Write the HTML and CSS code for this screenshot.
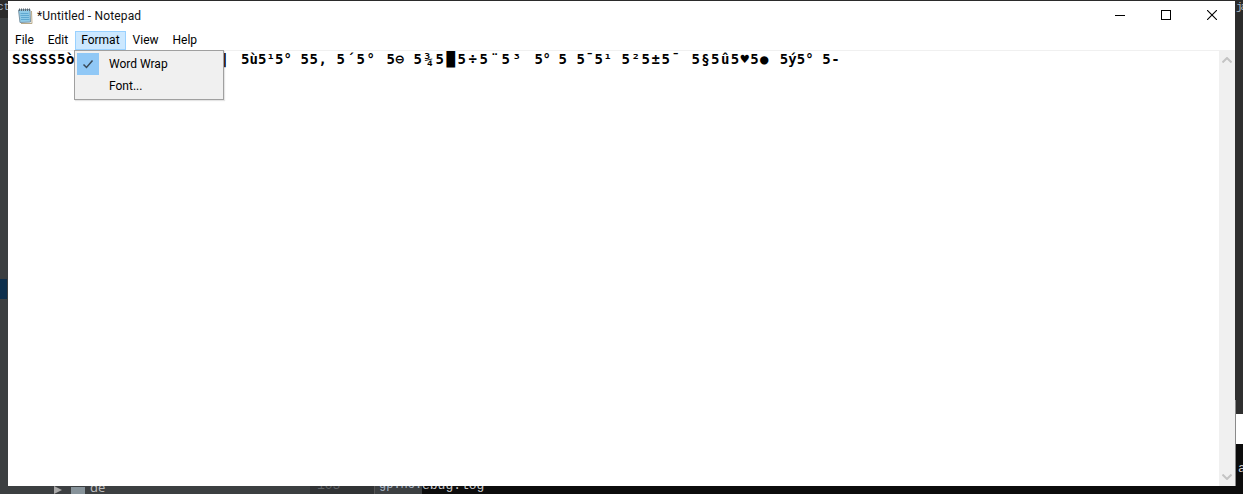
FILE: index.html
```html
<!DOCTYPE html>
<html lang="en">
<head>
  <meta charset="UTF-8">
  <title>*Untitled - Notepad</title>
  <link rel="stylesheet" href="styles.css">
</head>
<body>
  <!-- what shows around the notepad window -->
  <div class="desktop">
    <div class="left-strip">
      <div class="left-top"><span class="clip-left">ct</span></div>
      <div class="left-mid"></div>
      <div class="left-sel"></div>
      <div class="left-mid grow"></div>
    </div>
    <div class="center-strip">
      <div class="bottom-bar">
        <div class="tree">
          <span class="arrow"></span>
          <span class="folder"></span>
          <span>de</span>
        </div>
        <div class="gutter">103</div>
        <div class="code-dark">gp.hc.</div>
        <div class="code-black">ebug.log</div>
      </div>
    </div>
    <div class="right-strip">
      <div class="right-top">ja</div>
      <div class="right-mid"></div>
      <div class="right-white"></div>
      <div class="right-black">a</div>
    </div>
  </div>

  <div class="window">
    <div class="titlebar">
      <svg class="app-icon" width="16" height="16" viewBox="0 0 16 16">
        <path d="M1.5 2 L13 1.5 L13.5 14 L3 14.5 Z" fill="#8fcbe8" stroke="#7d97a7"/>
        <path d="M3.5 5.5H11.5M3.5 7.5H12M4 9.5H12M4 11.5H12.5" stroke="#5fa8d0"/>
        <path d="M14.5 3 L15 15.5 L4 15.5" fill="none" stroke="#b7a988"/>
        <path d="M2.5 0.5V3M4.5 0.5V3M6.5 0.5V3M8.5 0.5V3M10.5 0.5V3M12.5 0.5V3" stroke="#5a6770"/>
      </svg>
      <span class="title">*Untitled - Notepad</span>
      <div class="controls">
        <div class="ctl">
          <svg width="10" height="10" viewBox="0 0 10 10"><path d="M0 5.5H10" stroke="#000"/></svg>
        </div>
        <div class="ctl">
          <svg width="10" height="10" viewBox="0 0 10 10"><rect x="0.5" y="0.5" width="9" height="9" fill="none" stroke="#000"/></svg>
        </div>
        <div class="ctl">
          <svg width="10" height="10" viewBox="0 0 10 10"><path d="M0 0L10 10M10 0L0 10" stroke="#000" stroke-width="1.1"/></svg>
        </div>
      </div>
    </div>

    <div class="menubar">
      <div class="menu-item">File</div>
      <div class="menu-item">Edit</div>
      <div class="menu-item open">Format</div>
      <div class="menu-item">View</div>
      <div class="menu-item">Help</div>
    </div>

    <div class="editor">
      <pre class="text">SSSSS5ò                <span class="wider">‖ </span><span class="tight">5ù5¹5° </span>55, <span class="wide">5´5° </span>5⊖ <span class="wider">5¾5█5÷5¨5³ </span><span class="tighter">5° </span>5 5¯5¹ <span class="wide">5²5±5¯ </span><span class="mid">5§5û5♥5● </span><span class="tight">5ý5° </span>5-</pre>
      <div class="scrollbar">
        <svg width="10" height="6" viewBox="0 0 10 6"><path d="M0.5 5.5L5 1L9.5 5.5" fill="none" stroke="#c4c4c4" stroke-width="2"/></svg>
        <svg width="10" height="6" viewBox="0 0 10 6"><path d="M0.5 0.5L5 5L9.5 0.5" fill="none" stroke="#c4c4c4" stroke-width="2"/></svg>
      </div>
    </div>

    <div class="dropdown">
      <div class="drop-row">
        <span class="check">
          <svg width="12" height="10" viewBox="0 0 12 10"><path d="M1.5 5.5L4.5 8.5L10.5 1.5" fill="none" stroke="#3a4a58" stroke-width="1.5"/></svg>
        </span>
        <span class="drop-label">Word Wrap</span>
      </div>
      <div class="drop-row">
        <span class="check none"></span>
        <span class="drop-label">Font...</span>
      </div>
    </div>

    <div class="window-edge"></div>
  </div>
</body>
</html>
```

FILE: styles.css
```css
html, body {
  margin: 0;
  padding: 0;
  height: 100%;
}
body {
  position: relative;
  overflow: hidden;
  background-color: #3c3f41;
  font-family: Roboto, "Noto Sans", sans-serif;
}

/* background behind the window */
.desktop {
  display: flex;
  height: 494px;
}
.left-strip {
  width: 8px;
  display: flex;
  flex-direction: column;
  overflow: hidden;
}
.left-top {
  height: 18px;
  background-color: #2b2b2b;
  color: #a9b7c6;
  font: 11px "Liberation Mono", monospace;
  line-height: 14px;
  white-space: nowrap;
}
.clip-left {
  display: block;
  margin-left: -3px;
}
.left-mid {
  height: 261px;
  background-color: #3c3f41;
}
.left-mid.grow {
  height: auto;
  flex: 1;
}
.left-sel {
  height: 20px;
  width: 7px;
  background-color: #0d2f4c;
}
.center-strip {
  flex: 1;
  display: flex;
  flex-direction: column;
  justify-content: flex-end;
  background-color: #2b2b2b;
}
.bottom-bar {
  display: flex;
  height: 20px;
  margin-left: -8px;
  margin-right: -8px;
  font: 13px "Liberation Mono", monospace;
  line-height: 20px;
  align-items: flex-end;
  background-color: #3c3f41;
}
.tree {
  width: 310px;
  height: 20px;
  box-sizing: border-box;
  padding-left: 54px;
  display: flex;
  align-items: flex-end;
  color: #bbbbbb;
  font-family: "Noto Sans", sans-serif;
  font-size: 13px;
  line-height: 14px;
}
.arrow {
  width: 0;
  height: 0;
  border-left: 8px solid #a9a9a9;
  border-top: 4px solid transparent;
  border-bottom: 4px solid transparent;
  margin-right: 9px;
}
.folder {
  width: 14px;
  height: 7px;
  background-color: #87939a;
  margin-right: 5px;
}
.gutter {
  width: 65px;
  height: 20px;
  box-sizing: border-box;
  padding-left: 7px;
  background-color: #313335;
  color: #606366;
  border-right: 1px solid #555;
  line-height: 23px;
}
.code-dark {
  width: 47px;
  height: 20px;
  padding-left: 4px;
  box-sizing: border-box;
  background-color: #3c3f41;
  color: #a9b7c6;
  font-size: 12px;
  line-height: 23px;
  white-space: nowrap;
  overflow: hidden;
}
.code-black {
  flex: 1;
  height: 20px;
  background-color: #0c0c0c;
  color: #d0d0d0;
  line-height: 23px;
}
.right-strip {
  width: 8px;
  display: flex;
  flex-direction: column;
  overflow: hidden;
  position: relative;
  z-index: 1;
}
.right-top {
  height: 30px;
  background-color: #2b2b2b;
  color: #a9b7c6;
  font: 11px "Liberation Mono", monospace;
  letter-spacing: -2px;
  line-height: 14px;
  padding-left: 1px;
}
.right-mid {
  height: 385px;
  background-color: #2f2f2f;
}
.right-white {
  height: 30px;
  background-color: #ffffff;
}
.right-black {
  flex: 1;
  background-color: #0c0c0c;
  color: #d0d0d0;
  font: 13px "Liberation Mono", monospace;
  line-height: 50px;
  padding-left: 3px;
}

/* notepad window, floating over the desktop */
.window {
  position: absolute;
  left: 8px;
  top: 1px;
  width: 1227px;
  height: 485px;
  background-color: #fff;
  display: flex;
  flex-direction: column;
  font-size: 12px;
  color: #000;
}
.window-edge {
  position: absolute;
  right: -1px;
  bottom: 0;
  width: 1px;
  height: 86px;
  background-color: #8a8a8a;
  z-index: 2;
}
.titlebar {
  height: 30px;
  display: flex;
  align-items: center;
  padding-left: 9px;
}
.app-icon {
  margin-right: 4px;
}
.title {
  flex: 1;
  color: #111;
  padding-bottom: 1px;
  letter-spacing: 0.15px;
}
.controls {
  display: flex;
}
.ctl {
  width: 46px;
  height: 30px;
  display: flex;
  align-items: center;
  justify-content: center;
  padding-bottom: 2px;
  box-sizing: border-box;
}
.ctl svg {
  display: block;
}
.menubar {
  height: 19px;
  display: flex;
}
.menu-item {
  padding: 0 7px;
  line-height: 19px;
  box-sizing: border-box;
}
.menu-item.open {
  background-color: #cce8ff;
  border: 1px solid #99d1ff;
  padding: 0 5px;
  line-height: 17px;
}
.editor {
  flex: 1;
  display: flex;
  border-top: 1px solid #f0f0f0;
  min-height: 0;
}
.text {
  flex: 1;
  margin: 0;
  padding: 1px 0 0 4px;
  font: bold 14px "DejaVu Sans Mono", monospace;
  letter-spacing: 0.57px;
  line-height: 15px;
  color: #000;
  white-space: pre;
  overflow: hidden;
}
.tighter {
  letter-spacing: -0.43px;
}
.tight {
  letter-spacing: 0.07px;
}
.mid {
  letter-spacing: 1.37px;
}
.wide {
  letter-spacing: 1.57px;
}
.wider {
  letter-spacing: 2.57px;
}
.scrollbar {
  width: 16px;
  background-color: #f0f0f0;
  display: flex;
  flex-direction: column;
  justify-content: space-between;
  align-items: center;
  padding: 6px 0;
  box-sizing: border-box;
}
.scrollbar svg {
  display: block;
}
.dropdown {
  position: absolute;
  left: 66px;
  top: 49px;
  width: 150px;
  height: 50px;
  box-sizing: border-box;
  padding: 2px;
  background-color: #f0f0f0;
  border: 1px solid #a0a0a0;
  box-shadow: 1px 1px 1px rgba(0, 0, 0, 0.1);
}
.drop-row {
  height: 22px;
  display: flex;
  align-items: center;
}
.check {
  width: 22px;
  height: 22px;
  margin-right: 10px;
  background-color: #90c8f6;
  display: flex;
  align-items: center;
  justify-content: center;
}
.check.none {
  background-color: transparent;
}
.drop-label {
  padding-bottom: 1px;
}
```
